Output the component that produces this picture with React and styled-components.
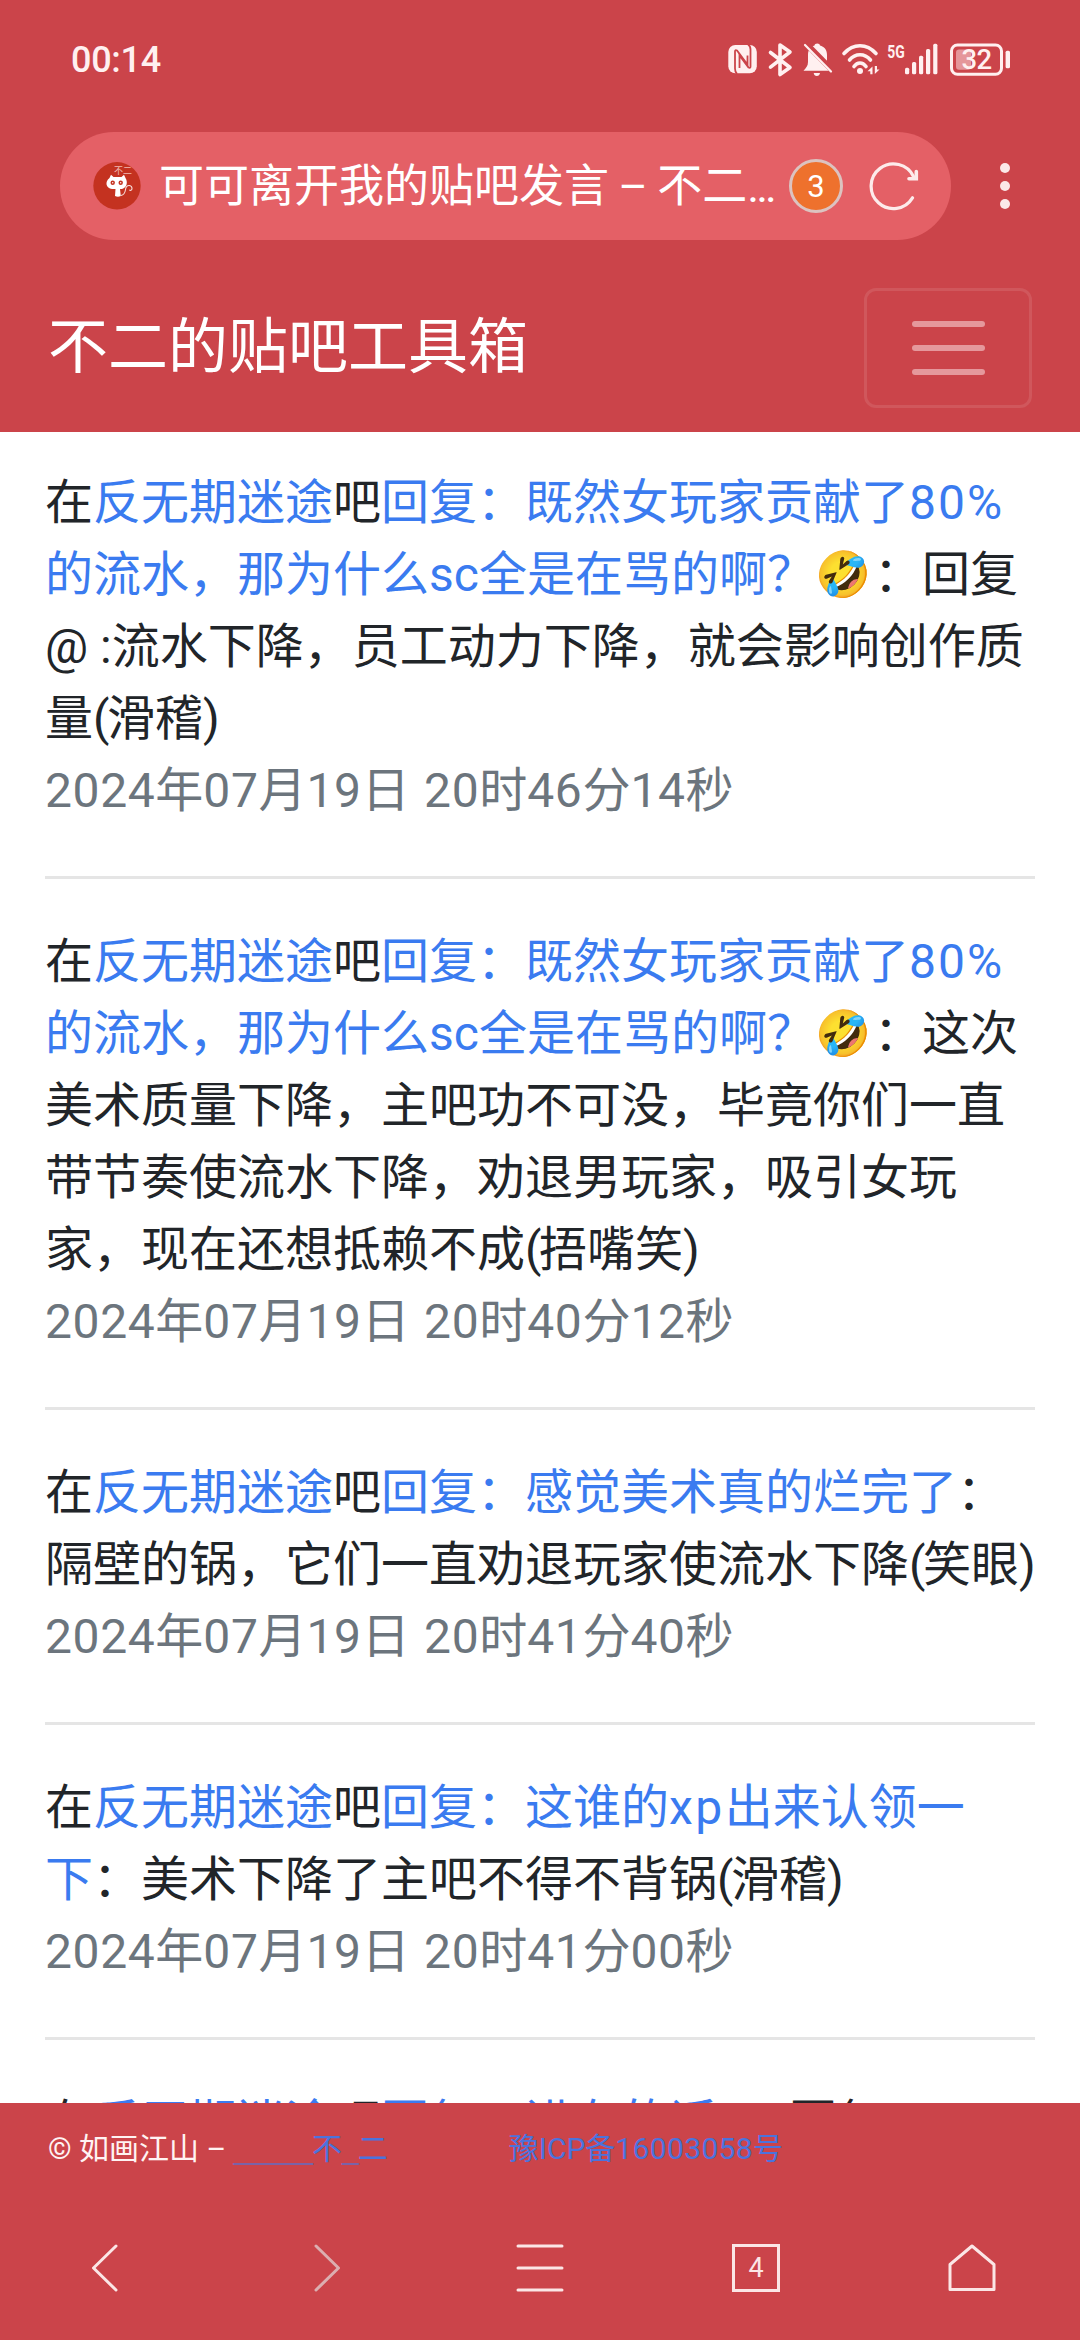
import styled, { createGlobalStyle } from "styled-components";

const GlobalStyle = createGlobalStyle`
    * {
        box-sizing: border-box;
    }

    body {
        margin: 0;
        background-color: #ffffff;
        font-family: Roboto, "Noto Sans CJK SC", "Noto Color Emoji", sans-serif;
    }

    svg {
        display: block;
        flex: none;
    }
`;

const Phone = styled.div`
    width: 1080px;
    height: 2340px;
    display: flex;
    flex-direction: column;
    overflow: hidden;
    background-color: #ffffff;
`;

const Header = styled.header`
    flex: none;
    height: 432px;
    background-color: #cb444a;
    color: #ffffff;
`;

const StatusBar = styled.div`
    height: 120px;
    display: flex;
    align-items: center;
    justify-content: space-between;
    padding: 0 68px 0 71px;
`;

const Clock = styled.div`
    font-size: 36px;
    font-weight: 500;
    line-height: 40px;
    letter-spacing: -0.3px;
    color: #fff0f0;
`;

const AddressRow = styled.div`
    display: flex;
    align-items: center;
    padding: 12px 0 0 60px;
`;

const AddressBar = styled.div`
    width: 891px;
    height: 108px;
    display: flex;
    align-items: center;
    padding: 0 32px 0 33px;
    border-radius: 54px;
    background-color: #e46066;
`;

const PageTitle = styled.div`
    width: 630px;
    margin-left: 18px;
    padding-top: 2px;
    font-size: 45px;
    line-height: 60px;
    white-space: nowrap;
    word-spacing: -1.8px;
`;

const Badge = styled.div`
    flex: none;
    width: 54px;
    height: 54px;
    margin-right: 26px;
    border: 3px solid #dcc3c0;
    border-radius: 50%;
    background-color: #ee712d;
    font-size: 31px;
    line-height: 49px;
    text-align: center;
`;

const MoreButton = styled.div`
    display: flex;
    flex-direction: column;
    gap: 8px;
    margin-left: 49px;
`;

const Dot = styled.span`
    width: 10px;
    height: 10px;
    border-radius: 50%;
    background-color: #fbe8e8;
`;

const Navbar = styled.div`
    display: flex;
    align-items: center;
    justify-content: space-between;
    padding: 48px 48px 0 48px;
`;

const Brand = styled.div`
    font-size: 60px;
    line-height: 90px;
`;

const Toggler = styled.div`
    width: 168px;
    height: 120px;
    display: flex;
    flex-direction: column;
    align-items: center;
    justify-content: center;
    gap: 18px;
    border: 3px solid #d0575c;
    border-radius: 12px;
`;

const TogglerBar = styled.span`
    width: 73px;
    height: 6px;
    border-radius: 3px;
    background-color: #e5989c;
`;

const Posts = styled.main`
    flex: 1;
    min-height: 0;
    overflow: hidden;
    padding: 35px 45px 0;
`;

const Post = styled.article`
    padding-bottom: 49px;
    margin-bottom: 47px;
    border-bottom: 3px solid #e5e5e5;
    color: #212529;
    font-size: 48px;
    line-height: 72px;
`;

const Link = styled.a`
    color: #3a7bf0;
`;

const Latin = styled.span`
    letter-spacing: ${(props) => props.$gap}px;
`;

const Emoji = styled.span`
    display: inline-block;
    width: 59px;
    height: 72px;
    vertical-align: top;
    font-family: "Noto Color Emoji";
    font-size: 45px;
    line-height: 72px;
`;

const Time = styled.div`
    color: #6c757d;
    word-spacing: 2.5px;
`;

const Footer = styled.footer`
    flex: none;
    height: 237px;
    background-color: #cb444a;
`;

const Copyright = styled.div`
    height: 90px;
    display: flex;
    align-items: center;
    padding: 0 48px;
    color: #fff3f3;
    font-size: 30px;
    line-height: 45px;
    white-space: pre;
`;

const FooterLink = styled.a`
    color: #4b73dd;
`;

const Underscore = styled.span`
    font-family: "Liberation Sans", sans-serif;
    letter-spacing: -1px;
    color: #7a63a8;
`;

const Licence = styled(FooterLink)`
    margin-left: 121px;
`;

const BottomNav = styled.nav`
    height: 150px;
    display: grid;
    grid-template-columns: repeat(5, 216px);
    align-items: center;
    justify-items: center;
`;

const TabCount = styled.div`
    width: 48px;
    height: 48px;
    border: 3px solid #fbe6e6;
    color: #fbe6e6;
    font-size: 27px;
    line-height: 43px;
    text-align: center;
`;

const StatusIcons = () => (
    <svg width="284" height="40" viewBox="0 0 284 40" fill="none" stroke="#fff0f0">
        {/* nfc */}
        <rect x="0.300" y="5" width="28.500" height="28.300" rx="7" fill="#fff0f0" stroke="none" />
        <path d="M9 34Q7 32 7 28.500V11.500Q7 9.500 9 10.500L19.500 24.500V15.500" stroke="#cb444a" strokeWidth="1.800" />
        <path d="M20 4.500Q22.500 6 22.500 9.500V26.500Q22.500 28.500 20.500 27.500L11.500 15.500V28" stroke="#cb444a" strokeWidth="1.800" />
        {/* bluetooth */}
        <path d="M42.500 12.500L62 27.500 52 34.500V5L62 12 42.500 27.200" strokeWidth="3.600" strokeLinejoin="round" strokeLinecap="round" />
        {/* muted bell */}
        <path d="M75.500 30.800C78 28 80 26 80 22V15C80 9.500 83 6.500 86.500 5.500 86.500 2.800 92 2.800 92 5.500 96 6.500 99 9.500 99 15V22C99 26 100 28 103 30.800ZM85.700 33H92Q91.500 36 88.800 36T85.700 33Z" fill="#fff0f0" stroke="none" />
        <path d="M77.500 3L104.500 30.500" stroke="#cb444a" strokeWidth="6" />
        <path d="M77 5L103 31.500" strokeWidth="2.200" strokeLinecap="round" />
        {/* wifi */}
        <g strokeWidth="3.600" strokeLinecap="round">
            <path d="M116 13.500Q123 5.800 132 5.800T148 13.500" />
            <path d="M121.500 20Q126 14.800 132 14.800T142.500 20" />
            <path d="M126 26.500Q128.500 23 132 23T138 26.500" />
        </g>
        <circle cx="132" cy="31" r="3" fill="#fff0f0" stroke="none" />
        <path d="M144.500 34.300V26.500L139.500 31.300H142.300V34.300ZM146.800 26V34L151.500 29.500H149V26Z" fill="#fff0f0" stroke="none" />
        {/* signal */}
        <text x="159.300" y="17.500" fontSize="18.500" fontWeight="700" fill="#fff0f0" stroke="none" textLength="17.500" lengthAdjust="spacingAndGlyphs">5G</text>
        <g fill="#fff0f0" stroke="none">
            <rect x="177" y="27.700" width="4.200" height="6.500" rx="1.500" />
            <rect x="184" y="22" width="4.200" height="12.200" rx="1.500" />
            <rect x="191" y="15.700" width="4.200" height="18.500" rx="1.500" />
            <rect x="198" y="9" width="4.200" height="25.200" rx="1.500" />
            <rect x="205.200" y="3.800" width="4.200" height="30.400" rx="1.500" />
        </g>
        {/* battery */}
        <rect x="223.500" y="5" width="50" height="29.300" rx="6" strokeWidth="3" />
        <rect x="228" y="9.500" width="15" height="20.300" rx="3" fill="#e5969a" stroke="none" />
        <rect x="277.600" y="10.700" width="4.400" height="17.500" rx="1.500" fill="#fff0f0" stroke="none" />
        <text x="233.600" y="29" fontSize="27.500" fontWeight="500" fill="#fff0f0" stroke="none" textLength="30.500">32</text>
    </svg>
);

const Favicon = () => (
    <svg width="48" height="48" viewBox="0 0 48 48">
        <circle cx="24" cy="23.800" r="23.700" fill="#c43220" />
        <text x="21" y="12.300" fontSize="9" fill="#f0b9b0">不二</text>
        <path d="M16.500 16L18 12.800 20.500 15H28.500L31 12.800 32.500 16C35 20 34 25.500 29 27H27L27.800 34Q25 35.500 22 34L22.500 27H19C13 26 11.500 20 16.500 16Z" fill="#ffffff" />
        <circle cx="19.700" cy="20.700" r="2.200" fill="#c43220" />
        <circle cx="27.700" cy="20.700" r="2.200" fill="#c43220" />
        <circle cx="19.700" cy="20.700" r="0.700" fill="#ffffff" />
        <circle cx="27.700" cy="20.700" r="0.700" fill="#ffffff" />
        <path d="M28 33.500C33 32.500 32 28 33 25.500 34.500 22 39 23.500 39 26.500 39 28.500 37 29 36.500 27.800" fill="none" stroke="#f6dcd8" strokeWidth="1.100" />
    </svg>
);

const ReloadIcon = () => (
    <svg width="50" height="50" viewBox="0 0 50 50" fill="none" stroke="#fdebeb" strokeWidth="3.200" strokeLinecap="round">
        <path d="M43.500 36.800A22.300 22.300 0 1 1 44.500 15.500" />
        <path d="M47.300 10.500V17.800H40" strokeWidth="3.600" />
    </svg>
);

const NavIcon = ({ d, color = "#fbe6e6" }) => (
    <svg width="48" height="48" viewBox="0 0 48 48" fill="none" stroke={color} strokeWidth="3" strokeLinecap="round" strokeLinejoin="round">
        <path d={d} />
    </svg>
);

const wordGaps = { sc: 0, xp: 2.4 };

const tracked = (text) =>
    text.split(/([0-9]+%?|[a-z]+|[()])/).map((part, i) => {
        if (i % 2 === 0) return part;
        let gap = wordGaps[part] ?? 0.6;
        if (part.endsWith("%")) gap = 2;
        if (/[()]/.test(part)) gap = -2.4;
        return <Latin key={i} $gap={gap}>{part}</Latin>;
    });

const posts = [
    {
        title: "既然女玩家贡献了80%的流水，那为什么sc全是在骂的啊？",
        emoji: "🤣",
        text: "回复 @ :流水下降，员工动力下降，就会影响创作质量(滑稽)",
        time: "2024年07月19日 20时46分14秒",
    },
    {
        title: "既然女玩家贡献了80%的流水，那为什么sc全是在骂的啊？",
        emoji: "🤣",
        text: "这次美术质量下降，主吧功不可没，毕竟你们一直带节奏使流水下降，劝退男玩家，吸引女玩家，现在还想抵赖不成(捂嘴笑)",
        time: "2024年07月19日 20时40分12秒",
    },
    {
        title: "感觉美术真的烂完了",
        text: "隔壁的锅，它们一直劝退玩家使流水下降(笑眼)",
        time: "2024年07月19日 20时41分40秒",
    },
    {
        title: "这谁的xp出来认领一下",
        text: "美术下降了主吧不得不背锅(滑稽)",
        time: "2024年07月19日 20时41分00秒",
    },
    {
        title: "进有的话，",
        text: "回复",
    },
];

const App = () => {
    return (
        <>
            <GlobalStyle />
            <Phone>
                <Header>
                    <StatusBar>
                        <Clock>00:14</Clock>
                        <StatusIcons />
                    </StatusBar>
                    <AddressRow>
                        <AddressBar>
                            <Favicon />
                            <PageTitle>
                                可可离开我的贴吧发言 – 不二<Latin $gap={-3}>...</Latin>
                            </PageTitle>
                            <Badge>3</Badge>
                            <ReloadIcon />
                        </AddressBar>
                        <MoreButton>
                            <Dot />
                            <Dot />
                            <Dot />
                        </MoreButton>
                    </AddressRow>
                    <Navbar>
                        <Brand>不二的贴吧工具箱</Brand>
                        <Toggler>
                            <TogglerBar />
                            <TogglerBar />
                            <TogglerBar />
                        </Toggler>
                    </Navbar>
                </Header>
                <Posts>
                    {posts.map((post, i) => (
                        <Post key={i}>
                            <div>
                                在<Link>反无期迷途</Link>吧
                                <Link>
                                    回复：{tracked(post.title)}
                                    {post.emoji && <Emoji>{post.emoji}</Emoji>}
                                </Link>
                                ：{tracked(post.text)}
                            </div>
                            {post.time && <Time>{tracked(post.time)}</Time>}
                        </Post>
                    ))}
                </Posts>
                <Footer>
                    <Copyright>
                        <span>© 如画江山 – </span>
                        <FooterLink>
                            <Underscore>_____</Underscore>不<Underscore>_</Underscore>二
                        </FooterLink>
                        <Licence>
                            豫ICP备<Latin $gap={0.35}>16003058</Latin>号
                        </Licence>
                    </Copyright>
                    <BottomNav>
                        <NavIcon d="M32 2L9.500 24 32 46" />
                        <NavIcon d="M16 2L38.500 24 16 46" color="#dcaeb0" />
                        <NavIcon d="M2 2H46M2 24H46M2 46H46" />
                        <TabCount>4</TabCount>
                        <NavIcon d="M24 2L46 20.500V45.500H2V20.500Z" />
                    </BottomNav>
                </Footer>
            </Phone>
        </>
    );
};

export default App;
